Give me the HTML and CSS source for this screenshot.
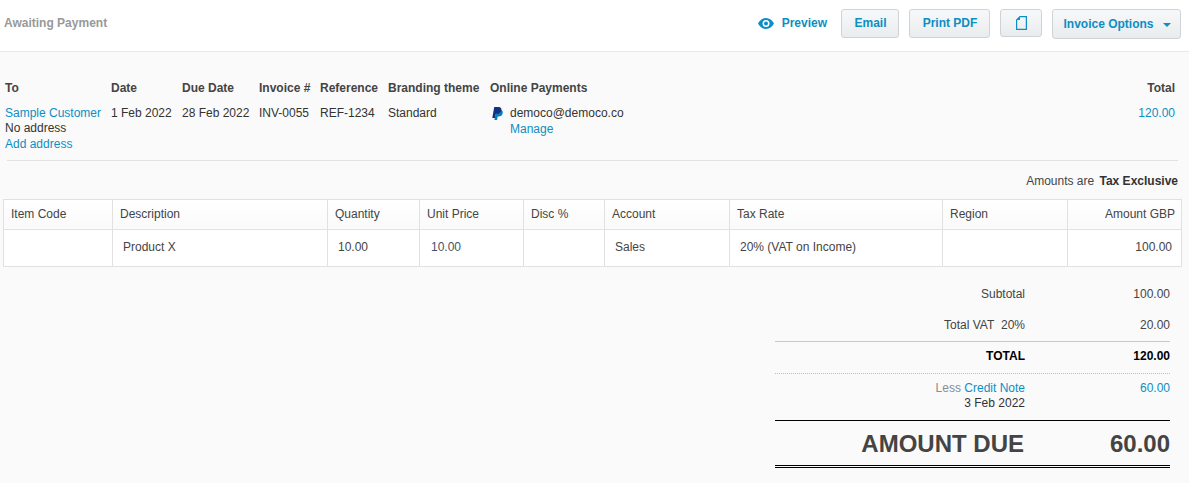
FILE: index.html
```html
<!DOCTYPE html>
<html lang="en">
<head>
<meta charset="utf-8">
<title>Invoice INV-0055</title>
<link rel="stylesheet" href="styles.css">
</head>
<body>
<header class="topbar">
  <div class="status">Awaiting Payment</div>
  <div class="actions">
    <a class="preview" href="#">
      <svg class="eye" width="16" height="11" viewBox="0 0 16 11"><path fill="#0b8fc4" fill-rule="evenodd" d="M8 0C4.600 0 1.700 2.200 0 5.500 1.700 8.800 4.600 11 8 11s6.300-2.200 8-5.500C14.300 2.200 11.400 0 8 0zm0 9a3.500 3.500 0 1 1 0-7 3.500 3.500 0 0 1 0 7z"/><circle cx="8" cy="5.500" r="2" fill="#0b8fc4"/></svg>
      <span>Preview</span>
    </a>
    <button class="btn btn-email">Email</button>
    <button class="btn btn-print">Print PDF</button>
    <button class="btn btn-icon" aria-label="Copy">
      <svg width="11" height="14" viewBox="0 0 11 14"><path fill="none" stroke="#0b8fc4" stroke-width="1.200" d="M4 .6h6.400v12.800H.6V4z"/><path fill="#0b8fc4" d="M.5 4L4 .5V4z"/></svg>
    </button>
    <button class="btn btn-options">Invoice Options<span class="caret"></span></button>
  </div>
</header>

<main class="content">
  <section class="meta">
    <div class="meta-head">To</div>
    <div class="meta-head">Date</div>
    <div class="meta-head">Due Date</div>
    <div class="meta-head">Invoice #</div>
    <div class="meta-head">Reference</div>
    <div class="meta-head">Branding theme</div>
    <div class="meta-head">Online Payments</div>
    <div class="meta-head meta-total">Total</div>

    <div class="meta-cell"><a href="#">Sample Customer</a><br><span class="ink">No address</span><br><a href="#">Add address</a></div>
    <div class="meta-cell">1 Feb 2022</div>
    <div class="meta-cell">28 Feb 2022</div>
    <div class="meta-cell">INV-0055</div>
    <div class="meta-cell">REF-1234</div>
    <div class="meta-cell">Standard</div>
    <div class="meta-cell payment">
      <svg class="paypal" width="11" height="13" viewBox="0 0 11 13"><path fill="#0a7cc4" d="M9.300 3c1.300.7 1.700 1.900 1.400 3.200-.5 2.100-2 3.200-4.100 3.200H5.700L5.100 13H2.400l.5-2.600 2-6z"/><path fill="#12337f" d="M2.200 0h4.300c2.300 0 3.300 1.300 2.900 3.200C8.900 5.400 7.300 6.700 5 6.700H3.900L3.100 11H.3z"/></svg>
      <div class="payment-text"><span class="ink">democo@democo.co</span><br><a href="#">Manage</a></div>
    </div>
    <div class="meta-cell meta-total"><a href="#">120.00</a></div>
  </section>

  <hr class="divider">

  <p class="tax-note">Amounts are <strong>Tax Exclusive</strong></p>

  <table class="items">
    <colgroup>
      <col class="c-code"><col class="c-desc"><col class="c-qty"><col class="c-price"><col class="c-disc"><col class="c-acct"><col class="c-tax"><col class="c-region"><col>
    </colgroup>
    <thead>
      <tr>
        <th>Item Code</th><th>Description</th><th>Quantity</th><th>Unit Price</th><th>Disc %</th><th>Account</th><th>Tax Rate</th><th>Region</th><th class="num">Amount GBP</th>
      </tr>
    </thead>
    <tbody>
      <tr>
        <td></td><td>Product X</td><td>10.00</td><td><span class="price">10.00</span></td><td></td><td>Sales</td><td>20% (VAT on Income)</td><td></td><td class="num">100.00</td>
      </tr>
    </tbody>
  </table>

  <section class="totals">
    <div class="row row-sub"><span>Subtotal</span><span>100.00</span></div>
    <div class="row row-vat"><span>Total VAT&nbsp; 20%</span><span>20.00</span></div>
    <div class="row row-total"><span>TOTAL</span><span>120.00</span></div>
    <div class="row row-less"><span><span class="muted">Less</span> <a href="#">Credit Note</a><br>3 Feb 2022</span><a href="#">60.00</a></div>
    <div class="row row-due"><span class="due-label">AMOUNT DUE</span><span>60.00</span></div>
  </section>
</main>
</body>
</html>
```
FILE: styles.css
```css
* { box-sizing: border-box; }
html, body { margin: 0; padding: 0; }
body {
  height: 483px;
  overflow: hidden;
  background: #fafafa;
  color: #444;
  font: 12px/15.5px "Liberation Sans", Arial, sans-serif;
}
a { color: #0b8fc4; text-decoration: none; }
.ink { color: #333; }
.muted { color: #8c8c8c; }

.topbar {
  height: 52px;
  display: flex;
  justify-content: space-between;
  align-items: flex-start;
  padding: 9px 8px 0 4px;
  background: #fff;
  border-bottom: 1px solid #e9e9e9;
}
.status { margin-top: 7px; font-weight: 700; color: #999; }
.actions { display: flex; align-items: flex-start; }
.preview {
  display: flex;
  align-items: center;
  height: 29px;
  margin-right: 14px;
  font-weight: 700;
}
.eye { margin-right: 8px; }
.btn {
  height: 29px;
  margin-left: 10px;
  padding: 0 0 1px 1px;
  border: 1px solid #d0d3d6;
  border-radius: 3px;
  background: linear-gradient(#f7f8f9, #e9ecee);
  color: #0b8fc4;
  font: 700 12px/15px "Liberation Sans", Arial, sans-serif;
  display: flex;
  align-items: center;
  justify-content: center;
}
.btn-email { width: 58px; margin-left: 0; }
.btn-print { width: 81px; }
.btn-icon { width: 42px; height: 28px; padding: 0; }
.btn-options { width: 129px; height: 30px; padding: 0 0 0 1px; }
.caret {
  margin: 2px 0 0 9px;
  border-left: 4px solid transparent;
  border-right: 4px solid transparent;
  border-top: 4px solid #0b8fc4;
}

.content { display: block; }

.meta {
  display: grid;
  grid-template-columns: 96px 61px 67px 51px 58px 92px 300px 1fr;
  column-gap: 10px;
  padding: 29px 14px 0 5px;
}
.meta-head { font-weight: 700; color: #444; height: 24.9px; white-space: nowrap; }
.meta-cell { color: #333; white-space: nowrap; }
.meta-total { text-align: right; }
.payment { display: flex; align-items: flex-start; }
.paypal { margin: 1px 7px 0 2px; flex: none; }
.payment-text { margin-top: 0.2px; }

.divider {
  height: 1px;
  margin: 8px 11px 0 7px;
  border: 0;
  background: #e2e2e2;
}
.tax-note {
  margin: 13px 11px 0 0;
  text-align: right;
  color: #444;
}
.tax-note strong { margin-left: 2px; color: #333; }

.items {
  width: 1179px;
  margin: 9px 0 0 3px;
  border-collapse: collapse;
  table-layout: fixed;
  background: #fff;
  border: 1px solid #e1e1e1;
}
.c-code { width: 109px; }
.c-desc { width: 215px; }
.c-qty { width: 92px; }
.c-price { width: 104px; }
.c-disc { width: 81px; }
.c-acct { width: 125px; }
.c-tax { width: 213px; }
.c-region { width: 125px; }
.items th, .items td {
  border: 1px solid #e1e1e1;
  white-space: nowrap;
  text-align: left;
}
.items th {
  height: 30px;
  padding: 0 7px;
  font-weight: 400;
  color: #444;
  background: linear-gradient(#fff, #fafafa);
}
.items td {
  height: 37px;
  padding: 0 10px;
  color: #444;
}
.items th.num { text-align: right; padding-right: 6px; }
.items td.num { text-align: right; padding-right: 9px; }
.price { margin-left: 1px; color: #3f5468; }

.totals {
  width: 395px;
  margin: 20px 0 0 775px;
}
.row {
  display: grid;
  grid-template-columns: 250px 145px;
  color: #444;
}
.row > :last-child { text-align: right; }
.row > :first-child { text-align: right; }
.row-sub { height: 31px; }
.row-vat { height: 23px; }
.row-total {
  height: 33px;
  padding-top: 7px;
  border-top: 1px solid #c9c9c9;
  border-bottom: 1px dotted #bbb;
  color: #000;
  font-weight: 700;
}
.row-less { height: 46px; padding-top: 7px; color: #333; line-height: 15px; }
.row-due {
  height: 48px;
  padding-top: 9px;
  border-top: 1px solid #000;
  border-bottom: 3px double #000;
  color: #444;
  font-size: 24px;
  line-height: 28px;
  font-weight: 700;
}
.due-label { padding-right: 1px; }
```
